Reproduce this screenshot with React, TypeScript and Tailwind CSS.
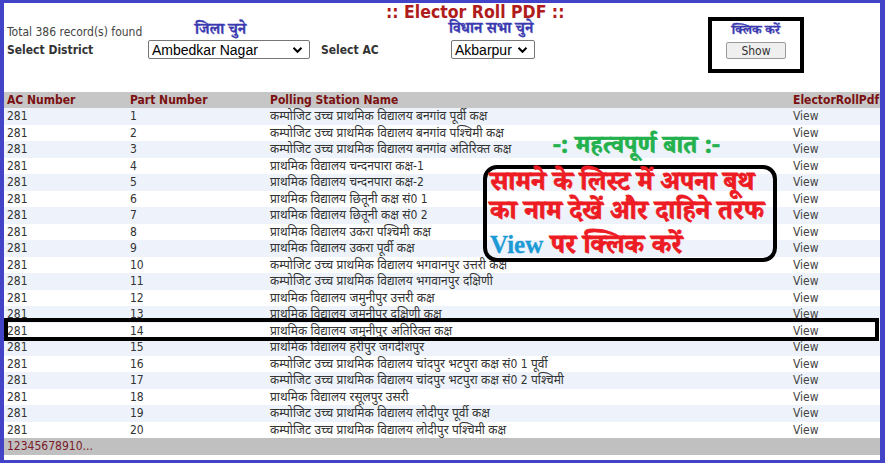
import React from "react";

const rows: string[] = [
  "कम्पोजिट उच्च प्राथमिक विद्यालय बनगांव पूर्वी कक्ष",
  "कम्पोजिट उच्च प्राथमिक विद्यालय बनगांव पश्चिमी कक्ष",
  "कम्पोजिट उच्च प्राथमिक विद्यालय बनगांव अतिरिक्त कक्ष",
  "प्राथमिक विद्यालय चन्दनपारा कक्ष-1",
  "प्राथमिक विद्यालय चन्दनपारा कक्ष-2",
  "प्राथमिक विद्यालय छितूनी कक्ष सं0 1",
  "प्राथमिक विद्यालय छितूनी कक्ष सं0 2",
  "प्राथमिक विद्यालय उकरा पश्चिमी कक्ष",
  "प्राथमिक विद्यालय उकरा पूर्वी कक्ष",
  "कम्पोजिट उच्च प्राथमिक विद्यालय भगवानपुर उत्तरी कक्ष",
  "कम्पोजिट उच्च प्राथमिक विद्यालय भगवानपुर दक्षिणी",
  "प्राथमिक विद्यालय जमुनीपुर उत्तरी कक्ष",
  "प्राथमिक विद्यालय जमुनीपुर दक्षिणी कक्ष",
  "प्राथमिक विद्यालय जमुनीपुर अतिरिक्त कक्ष",
  "प्राथमिक विद्यालय हरीपुर जगदीशपुर",
  "कम्पोजिट उच्च प्राथमिक विद्यालय चांदपुर भटपुरा कक्ष सं0 1 पूर्वी",
  "कम्पोजिट उच्च प्राथमिक विद्यालय चांदपुर भटपुरा कक्ष सं0 2 पश्चिमी",
  "प्राथमिक विद्यालय रसूलपुर उसरी",
  "कम्पोजिट उच्च प्राथमिक विद्यालय लोदीपुर पूर्वी कक्ष",
  "कम्पोजिट उच्च प्राथमिक विद्यालय लोदीपुर पश्चिमी कक्ष",
];

const UI = "font-['DejaVu_Sans_Condensed','DejaVu_Sans','Noto_Sans',sans-serif]";
const HEAVY = "font-['Noto_Serif_Devanagari','Noto_Sans_Devanagari','Noto_Sans',serif]";

function Chevron() {
  return (
    <svg width="11" height="8" viewBox="0 0 11 8" className="shrink-0">
      <path d="M1.5 1.8 L5.5 5.8 L9.5 1.8" fill="none" stroke="#000" strokeWidth="2" />
    </svg>
  );
}

function Select({ value, width }: { value: string; width: string }) {
  return (
    <div
      className={`${width} h-[19px] flex items-center justify-between border border-[#767676] rounded-[2px] bg-white pl-[3px] pr-[6px] font-['Liberation_Sans',Arial,sans-serif] text-[14px] text-black leading-none`}
    >
      <span>{value}</span>
      <Chevron />
    </div>
  );
}

export default function App() {
  return (
    <div className="w-[885px] h-[463px] bg-[#4343c8] pt-[3px] pl-[4px] pr-[5px] pb-[3px]">
      <div className={`relative w-full h-full bg-white overflow-hidden ${UI}`}>
        {/* header */}
        <div className="flex h-[89px] items-start">
          <div className="w-[144px] pl-[3px] pt-[22px] flex flex-col">
            <div className="text-[12px] leading-[14px] text-[#444]">Total 386 record(s) found</div>
            <div className="mt-[4px] text-[12px] leading-[14px] font-bold text-[#333]">Select District</div>
          </div>
          <div className="w-[162px] pt-[20px] flex flex-col">
            <div className={`pl-[47px] h-[17px] text-[15px] leading-[17px] font-bold text-[#3a3ab0] [-webkit-text-stroke:0.3px_#3a3ab0] ${HEAVY}`}>जिला चुने</div>
            <Select value="Ambedkar Nagar" width="w-[162px]" />
          </div>
          <div className="ml-[11px] w-[65px] pt-[40px] text-[12px] leading-[14px] font-bold text-[#333]">Select AC</div>
          <div className="w-[322px] flex flex-col">
            <div className="h-[18px] text-[17.5px] leading-[18px] font-bold text-[#b01c1c]">:: Elector Roll PDF ::</div>
            <div className={`pl-[63px] h-[19px] text-[15px] leading-[19px] font-bold text-[#3a3ab0] [-webkit-text-stroke:0.3px_#3a3ab0] ${HEAVY}`}>विधान सभा चुने</div>
            <div className="pl-[65px]">
              <Select value="Akbarpur" width="w-[84px]" />
            </div>
          </div>
          <div className="mt-[14px] w-[96px] h-[56px] border-[4px] border-black flex flex-col items-center pt-[2px]">
            <div className={`h-[18px] text-[13px] leading-[18px] font-bold text-[#3a3ab0] [-webkit-text-stroke:0.3px_#3a3ab0] ${HEAVY}`}>क्लिक करें</div>
            <button className="mt-[1px] w-[60px] h-[17px] bg-[#efefef] border border-[#9a9a9a] rounded-[2px] text-[12px] leading-none text-[#333]">
              Show
            </button>
          </div>
        </div>

        {/* table */}
        <table className="w-[876px] border-collapse table-fixed text-[12px]">
          <colgroup>
            <col className="w-[123px]" />
            <col className="w-[140px]" />
            <col className="w-[523px]" />
            <col className="w-[90px]" />
          </colgroup>
          <thead>
            <tr className="h-[16px] bg-[#c6c6c6] text-[#7a1010] font-bold">
              <td className="pl-[3px] p-0 leading-[16px]">AC Number</td>
              <td className="pl-[3px] p-0 leading-[16px]">Part Number</td>
              <td className="pl-[3px] p-0 leading-[16px]">Polling Station Name</td>
              <td className="pl-[3px] p-0 leading-[16px]">ElectorRollPdf</td>
            </tr>
          </thead>
          <tbody>
            {rows.map((name, i) => (
              <tr key={i} className={`h-[16.5px] ${i % 2 === 0 ? "bg-[#eef3fb]" : "bg-white"} text-[#333]`}>
                <td className="pl-[3px] p-0 leading-[16px]">281</td>
                <td className="pl-[3px] p-0 leading-[16px]">{i + 1}</td>
                <td className="pl-[3px] p-0 leading-[16px] whitespace-nowrap overflow-hidden">{name}</td>
                <td className="pl-[3px] p-0 leading-[16px] text-[#444]">View</td>
              </tr>
            ))}
            <tr className="h-[17px] bg-[#c0c0c0]">
              <td colSpan={4} className="pl-[3px] p-0 leading-[17px] text-[#7a1a2a]">12345678910...</td>
            </tr>
          </tbody>
        </table>

        {/* annotations */}
        <div className="absolute left-0 top-[315px] w-[875px] h-[23px] border-[4px] border-black" />
        <div className={`absolute left-[549px] top-[133px] text-[25px] leading-[28px] font-bold text-[#22b14c] [-webkit-text-stroke:0.6px_#22b14c] whitespace-nowrap ${HEAVY}`}>
          -: महत्वपूर्ण बात :-
        </div>
        <div
          className={`absolute left-[479px] top-[162px] w-[294px] h-[97px] border-[4px] border-black rounded-[14px] pl-[3px] pt-[3px] text-[26.5px] leading-[29px] font-bold text-[#ed1c24] [-webkit-text-stroke:0.8px_#ed1c24] ${HEAVY}`}
        >
          <div className="whitespace-nowrap h-[29px]">सामने के लिस्ट में अपना बूथ</div>
          <div className="whitespace-nowrap h-[29px]">का नाम देखें और दाहिने तरफ</div>
          <div className="whitespace-nowrap h-[29px]">
            <span className="text-[#1b9ad6] text-[25px] [-webkit-text-stroke:0.3px_#1b9ad6] font-['Liberation_Serif',serif]">View</span> पर क्लिक करें
          </div>
        </div>
      </div>
    </div>
  );
}
